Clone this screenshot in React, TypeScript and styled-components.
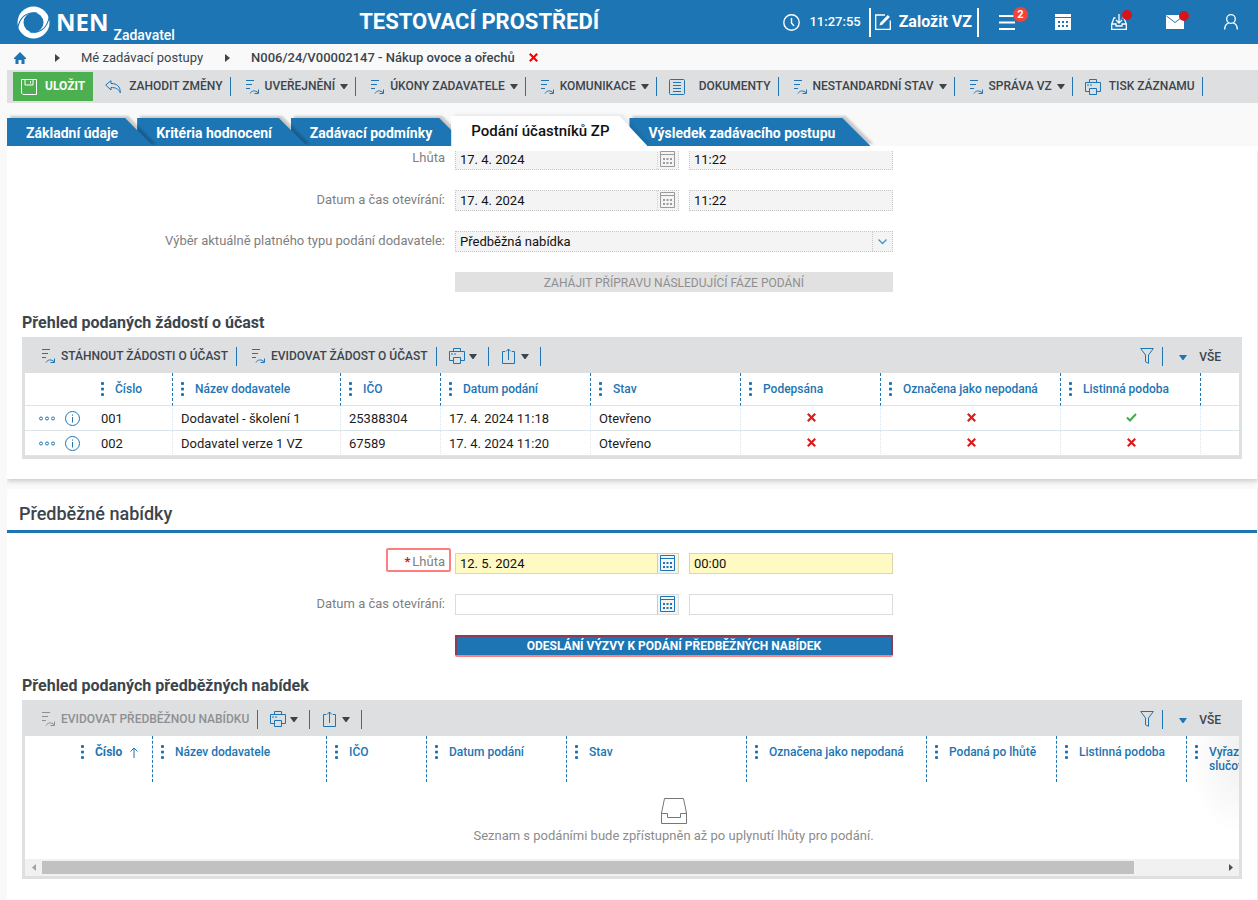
import React from "react";
import styled, { createGlobalStyle, css } from "styled-components";

const blue = "#1d75b3";
const dark = "#3c454c";
const bar = "#dedfe1";
const line = "#dbe5ec";

const GlobalStyle = createGlobalStyle`
  * { box-sizing: border-box; }
  body {
    margin: 0;
    background: #f9f9f9;
    color: #1c1c1c;
    font-family: Roboto, "Liberation Sans", sans-serif;
    font-size: 13px;
    line-height: 16px;
  }
  button, input, select { font: inherit; color: inherit; margin: 0; padding: 0; border: 0; border-radius: 0; background: none; }
  h1, h2, h3, p { margin: 0; }
  a { color: inherit; text-decoration: none; }
  svg { display: block; flex: none; }
`;

/* ---------- icons ---------- */

const ActionIcon = () => (
  <svg width="16" height="16" viewBox="0 0 16 16" fill="none" stroke="currentColor" aria-hidden="true">
    <path d="M1 1.500h8M1 5.500h6M1 9.500h4" />
    <path d="M5 14.500c1.500-3 5.500-3.500 8-.8M13.500 10.500v4h-4" />
  </svg>
);

const SaveIcon = () => (
  <svg width="16" height="16" viewBox="0 0 16 16" fill="none" stroke="currentColor" aria-hidden="true">
    <path d="M.5.5h15v15H2L.5 14zM4 .5v5.500h8V.5" />
    <path d="M9.500 2v2.500" />
  </svg>
);

const UndoIcon = () => (
  <svg width="16" height="16" viewBox="0 0 16 16" fill="none" stroke="currentColor" strokeLinejoin="round" aria-hidden="true">
    <path d="M.7 6 6 1.700v2.800c6 0 9.300 2.800 9.300 9.300-1.800-4-4.600-5.300-9.300-5.300V11z" />
  </svg>
);

const DocIcon = () => (
  <svg width="16" height="16" viewBox="0 0 16 16" fill="none" stroke="currentColor" aria-hidden="true">
    <rect x=".5" y=".5" width="15" height="15" rx="1" />
    <path d="M4 3.500h8M4 6.500h8M4 9.500h8M4 12.500h8" />
  </svg>
);

const PrintIcon = () => (
  <svg width="16" height="16" viewBox="0 0 16 16" fill="none" stroke="currentColor" aria-hidden="true">
    <path d="M4.500 3.500v-3h7v3M4.500 12.500h-4v-9h15v9h-4" />
    <path d="M4.500 9.500h7v6h-7zM2 6h2M5 6h2" />
  </svg>
);

const ShareIcon = () => (
  <svg width="16" height="16" viewBox="0 0 16 16" fill="none" stroke="currentColor" aria-hidden="true">
    <path d="M4 3.500H1.500v12h12v-12H11M7.500 12V1M5 3.500 7.500 1 10 3.500" />
  </svg>
);

const FilterIcon = () => (
  <svg width="14" height="16" viewBox="0 0 14 16" fill="none" stroke="currentColor" aria-hidden="true">
    <path d="M.7.500h12.600L8.500 7v8.300l-3-1.500V7z" />
  </svg>
);

const CaretIcon = () => (
  <svg width="8" height="5" viewBox="0 0 8 5" fill="currentColor" aria-hidden="true">
    <path d="M0 0h8L4.500 5h-1z" />
  </svg>
);

const CalendarIcon = () => (
  <svg width="15" height="16" viewBox="0 0 15 16" fill="none" stroke="currentColor" aria-hidden="true">
    <path d="M.5.5h14v15H.5zM0 3.500h15" />
    <path d="M3 8h2M6.500 8h2M10 8h2M3 12h2M6.500 12h2M10 12h2" strokeWidth="2" />
  </svg>
);

const CrossIcon = ({ color = "#dd1c1c" }: { color?: string }) => (
  <svg width="9" height="9" viewBox="0 0 9 9" fill="none" stroke={color} strokeWidth="2.200" aria-label="Ne" role="img">
    <path d="m.8.800 7.400 7.400M8.200.8.800 8.200" />
  </svg>
);

const CheckIcon = () => (
  <svg width="11" height="9" viewBox="0 0 11 9" fill="none" stroke="#43ac47" strokeWidth="2" aria-label="Ano" role="img">
    <path d="m1 4.500 3 3L10 1" />
  </svg>
);

const InfoIcon = () => (
  <svg width="15" height="15" viewBox="0 0 15 15" fill="none" stroke="currentColor" aria-hidden="true">
    <circle cx="7.500" cy="7.500" r="7" />
    <path d="M7.500 6v5.500M7.500 3.500v1.200" />
  </svg>
);

const MoreIcon = () => (
  <svg width="16" height="5" viewBox="0 0 16 5" fill="none" stroke="currentColor" aria-hidden="true">
    <circle cx="2" cy="2.500" r="1.500" />
    <circle cx="8" cy="2.500" r="1.500" />
    <circle cx="14" cy="2.500" r="1.500" />
  </svg>
);

const DotsIcon = () => (
  <svg width="3" height="14" viewBox="0 0 3 14" fill="currentColor" aria-hidden="true">
    <circle cx="1.500" cy="1.500" r="1.600" />
    <circle cx="1.500" cy="7" r="1.600" />
    <circle cx="1.500" cy="12.500" r="1.600" />
  </svg>
);

const CrumbArrow = () => (
  <svg width="5" height="8" viewBox="0 0 5 8" fill="currentColor" aria-hidden="true">
    <path d="M0 0v8l5-4z" />
  </svg>
);

/* ---------- header ---------- */

const Header = styled.header`
  display: grid;
  grid-template-columns: auto 1fr auto;
  align-items: center;
  height: 44px;
  padding-left: 17px;
  background: ${blue};
  color: #fff;
`;

const Logo = styled.a`
  display: flex;
  align-items: center;
  height: 44px;
`;

const LogoName = styled.span`
  margin-left: 6px;
  font: 700 24px/32px "Open Sans", sans-serif;
`;

const LogoRole = styled.span`
  align-self: flex-end;
  padding-left: 5px;
  font-size: 14px;
  font-weight: 500;
  line-height: 18px;
`;

const Environment = styled.h1`
  text-align: center;
  font-size: 22px;
  line-height: 24px;
  font-weight: 700;
`;

const HeaderTools = styled.div`
  display: flex;
  align-items: center;
`;

const Clock = styled.time`
  display: flex;
  align-items: center;
  gap: 9px;
  margin-right: 8px;
  font-size: 13px;
  font-weight: 500;
`;

const CreateButton = styled.button`
  display: flex;
  align-items: center;
  gap: 8px;
  height: 29px;
  margin-right: -1px;
  padding: 0 5px 0 4px;
  border: solid #fff;
  border-width: 0 2px;
  font-size: 16px;
  font-weight: 700;
`;

const HeaderButton = styled.button`
  display: flex;
  justify-content: center;
  align-items: center;
  width: 56px;
  height: 44px;
  padding-left: 2px;
`;

const IconHolder = styled.span`
  position: relative;
`;

const CountBadge = styled.span`
  position: absolute;
  left: 14px;
  top: -8px;
  width: 15px;
  height: 15px;
  border-radius: 50%;
  background: #f44336;
  font-size: 11px;
  font-weight: 700;
  line-height: 15px;
  text-align: center;
`;

const AlertDot = styled.span`
  position: absolute;
  right: -5px;
  top: -4px;
  width: 10px;
  height: 10px;
  border-radius: 50%;
  background: #d7141a;
`;

/* ---------- breadcrumb ---------- */

const Breadcrumb = styled.nav`
  display: flex;
  align-items: center;
  height: 26px;
  padding: 1px 0 0 14px;
  color: ${dark};
  svg { color: ${dark}; }
`;

const Crumb = styled.a<{ $current?: boolean }>`
  margin: 0 22px 0 21px;
  font-weight: ${(p) => (p.$current ? 500 : 400)};
  ${(p) => p.$current && css`margin-right: 14px;`}
`;

const HomeLink = styled.a`
  margin-right: 29px;
  svg { color: ${blue}; }
`;

/* ---------- toolbars ---------- */

const Toolbar = styled.div`
  display: flex;
  align-items: center;
  height: 33px;
  margin-left: 7px;
  padding-left: 6px;
  background: ${bar};
`;

const SaveButton = styled.button`
  display: flex;
  align-items: center;
  gap: 8px;
  height: 29px;
  padding: 0 8px;
  background: #4caf50;
  color: #fff;
  font-size: 12px;
  font-weight: 700;
`;

const ToolButton = styled.button<{ $kind?: "action" | "wide" | "icon" | "plain" }>`
  display: flex;
  align-items: center;
  gap: ${(p) => (p.$kind === "plain" ? 8 : p.$kind === "wide" ? 14 : 4)}px;
  height: 19px;
  padding: 0 7px 0 ${(p) => (p.$kind === "action" ? 14 : 12)}px;
  ${(p) => p.$kind === "icon" && css`padding-right: 11px;`}
  border-right: 1px solid ${blue};
  color: ${dark};
  font-size: 12px;
  font-weight: 500;
  white-space: nowrap;
  &:disabled { color: #8d9092; }
`;

const ToolText = styled.span<{ $spaced?: boolean }>`
  padding: 0 ${(p) => (p.$spaced ? 1 : 0)}px 1px 0;
`;

const ToolIcon = styled.span<{ $muted?: boolean }>`
  color: ${(p) => (p.$muted ? "#8d9092" : blue)};
`;

const GridBar = styled.div`
  display: flex;
  align-items: center;
  height: 36px;
  padding: 2px 18px 0 2px;
`;

const GridBarEnd = styled.div`
  display: flex;
  align-items: center;
  margin-left: auto;
  color: ${blue};
`;

const FilterButton = styled.button`
  height: 19px;
  padding: 0 8px;
  border-right: 1px solid ${blue};
`;

const ViewButton = styled.button`
  display: flex;
  align-items: center;
  gap: 12px;
  padding: 2px 0 0 16px;
  font-size: 12px;
  font-weight: 500;
  span { color: ${dark}; }
`;

/* ---------- tabs ---------- */

const Tabs = styled.div`
  display: flex;
  align-items: flex-end;
  height: 43px;
  padding: 0 7px;
  overflow: hidden;
`;

const TabShape = styled.span<{ $active?: boolean }>`
  position: absolute;
  inset: 0;
  z-index: -1;
  filter: drop-shadow(3px -2px 1px rgba(0, 0, 0, ${(p) => (p.$active ? 0.06 : 0.2)}));
  &::before {
    content: "";
    position: absolute;
    inset: 0;
    background: ${(p) => (p.$active ? "#fff" : blue)};
    clip-path: polygon(0 0, calc(100% - 28px) 0, 100% 100%, 0 100%);
  }
`;

const Tab = styled.button<{ $active?: boolean; $order: number }>`
  position: relative;
  z-index: ${(p) => p.$order};
  isolation: isolate;
  height: 28px;
  margin-right: -16px;
  padding: 2px 35px 0 19px;
  color: #fff;
  font-size: 14px;
  font-weight: 700;
  white-space: nowrap;
  ${(p) =>
    p.$active &&
    css`
      height: 30px;
      margin-right: -18px;
      padding: 0 38px 0 20px;
      color: #111;
      font-size: 15px;
      font-weight: 500;
    `}
`;

/* ---------- panels and forms ---------- */

const Content = styled.main`
  margin: 0 0 0 7px;
  padding-top: 5px;
  background: linear-gradient(#fff 5px, transparent 5px);
`;

const Scroller = styled.div`
  overflow: hidden;
`;

const Panel = styled.section<{ $scrolled?: boolean }>`
  margin-bottom: 10px;
  padding-bottom: 20px;
  border-right: 1px solid #e8e8e8;
  background: #fff;
  box-shadow: 0 2px 5px rgba(0, 0, 0, 0.2);
  ${(p) => p.$scrolled && css`margin-top: -2px;`}
  &:last-child { margin-bottom: 0; box-shadow: 0 1px 0 #f0f0f0; }
`;

const PanelTitle = styled.h2`
  padding: 14px 12px 5px;
  border-bottom: 3px solid ${blue};
  color: ${dark};
  font-size: 18px;
  font-weight: 500;
  line-height: 22px;
  margin-bottom: 20px;
`;

const GridTitle = styled.h3`
  padding: 0 15px;
  color: ${dark};
  font-size: 16px;
  font-weight: 700;
  line-height: 21px;
`;

const FormGrid = styled.div`
  display: grid;
  grid-template-columns: minmax(0, 438px) minmax(0, 438px);
  column-gap: 10px;
  row-gap: 20px;
  margin-bottom: 20px;
`;

const Label = styled.label<{ $raised?: boolean }>`
  justify-self: end;
  align-self: start;
  position: relative;
  color: #808080;
  line-height: ${(p) => (p.$raised ? 17 : 20)}px;
`;

const RequiredMark = styled.span`
  margin-right: 2px;
  color: #d7141a;
  font-weight: 700;
`;

const LabelHighlight = styled.span`
  position: absolute;
  inset: -5px -6px -2px -18px;
  border: 2px solid rgba(255, 0, 0, 0.5);
  border-radius: 2px;
`;

const Fields = styled.div`
  display: grid;
  grid-template-columns: 224fr 204fr;
  gap: 10px;
`;

type Look = "disabled" | "required" | "empty";

const looks = {
  disabled: css`border: 1px dotted #c8c8c8; background: #f4f4f4;`,
  required: css`border: 1px solid #ddd7a8; background: #fff9c4;`,
  empty: css`border: 1px solid #dcdcdc; background: #fff;`,
};

const DateBox = styled.div<{ $look: Look }>`
  display: flex;
  min-width: 0;
  height: 21px;
  ${(p) => looks[p.$look]}
`;

const DateInput = styled.input`
  flex: 1;
  min-width: 0;
  padding: 0 4px;
  color: #111;
`;

const PickButton = styled.button<{ $look: Look }>`
  display: flex;
  justify-content: center;
  align-items: center;
  width: 21px;
  padding: 0 2px 1px 0;
  border-left: 1px ${(p) => (p.$look === "disabled" ? "dotted" : "solid")} #ccc;
  background: #f4f4f4;
  color: ${(p) => (p.$look === "disabled" ? "#9a9a9a" : blue)};
`;

const TimeInput = styled.input<{ $look: Look }>`
  min-width: 0;
  height: 21px;
  padding: 0 4px;
  color: #111;
  && { ${(p) => looks[p.$look]} }
`;

const SelectBox = styled.div`
  display: flex;
  position: relative;
  height: 21px;
  ${looks.disabled}
`;

const Select = styled.select`
  flex: 1;
  padding: 0 4px;
  appearance: none;
  color: #111;
  opacity: 1;
`;

const SelectArrow = styled.span`
  position: absolute;
  inset: 0 0 0 auto;
  display: flex;
  justify-content: center;
  align-items: center;
  width: 20px;
  border-left: 1px dotted #c8c8c8;
  color: #3d94cc;
  pointer-events: none;
`;

const WideButton = styled.button<{ $primary?: boolean }>`
  grid-column: 2;
  position: relative;
  height: 20px;
  padding-top: 2px;
  background: ${(p) => (p.$primary ? blue : "#e1e1e1")};
  color: ${(p) => (p.$primary ? "#fff" : "#8f8f8f")};
  font-size: 12px;
  font-weight: ${(p) => (p.$primary ? 700 : 400)};
`;

const ButtonHighlight = styled.span`
  position: absolute;
  inset: 0 0 -2px;
  border: 2px solid rgba(255, 0, 0, 0.5);
  border-radius: 2px;
`;

/* ---------- data grids ---------- */

const GridBox = styled.div`
  margin: 4px 15px 0;
  border: solid ${bar};
  border-width: 0 3px 3px;
  background: linear-gradient(${bar} 36px, #fff 36px);
`;

const Table = styled.table`
  width: 100%;
  table-layout: fixed;
  border-spacing: 0;
`;

const Head = styled.th<{ $line?: boolean; $sorted?: boolean }>`
  height: ${(p) => (p.$line ? 33 : 46)}px;
  padding: 9px 8px 0;
  vertical-align: top;
  text-align: left;
  border-bottom: ${(p) => (p.$line ? `1px solid ${line}` : "0")};
  border-right: 1px dashed ${blue};
  color: ${blue};
  font-size: 12px;
  font-weight: ${(p) => (p.$sorted ? 700 : 500)};
  line-height: 14px;
  &:first-child, &:last-child { border-right: 0; }
`;

const HeadInner = styled.span`
  display: flex;
  gap: 11px;
`;

const HeadText = styled.span`
  display: flex;
  gap: 8px;
`;

const Cell = styled.td<{ $mark?: boolean }>`
  height: 25px;
  padding: ${(p) => (p.$mark ? "0 7px 2px 9px" : "2px 8px 0")};
  border-right: 1px dotted ${line};
  border-bottom: 1px solid ${line};
  white-space: nowrap;
  svg { margin: 0 auto; }
  &:first-child, &:last-child { border-right: 0; padding-top: 0; }
`;

const RowActions = styled.div`
  display: flex;
  align-items: center;
  gap: 10px;
  padding-left: 6px;
  color: ${blue};
  button { display: block; }
`;

const Viewport = styled.div`
  position: relative;
  overflow: hidden;
`;

const Wide = styled.div`
  width: 1297px;
`;

const EdgeShade = styled.div`
  position: absolute;
  top: 0;
  right: 0;
  width: 50px;
  height: 100px;
  background: radial-gradient(ellipse at 100% 20%, rgba(0, 0, 0, 0.06), transparent 70%);
  pointer-events: none;
`;

const Empty = styled.div`
  display: flex;
  flex-direction: column;
  align-items: center;
  gap: 4px;
  height: 77px;
  padding-top: 16px;
  color: #8c8c8c;
`;

const ScrollTrack = styled.div`
  display: flex;
  align-items: center;
  height: 17px;
  background: #f1f1f1;
`;

const ScrollArrow = styled.button`
  display: flex;
  justify-content: center;
  align-items: center;
  width: 17px;
  height: 17px;
  color: #505050;
  &:disabled { color: #a3a3a3; }
`;

const ScrollRail = styled.div`
  flex: 1;
`;

const ScrollThumb = styled.div`
  width: 92.5%;
  height: 13px;
  background: #c1c1c1;
`;

/* ---------- composed parts ---------- */

const MenuTool = ({ text }: { text: string }) => (
  <ToolButton $kind="action">
    <ToolIcon><ActionIcon /></ToolIcon>
    <ToolText $spaced>{text}</ToolText>
    <CaretIcon />
  </ToolButton>
);

const GridTools = ({ actions, disabled }: { actions: string[]; disabled?: boolean }) => (
  <GridBar>
    {actions.map((text) => (
      <ToolButton key={text} $kind="action" disabled={disabled}>
        <ToolIcon $muted={disabled}><ActionIcon /></ToolIcon>
        <ToolText $spaced>{text}</ToolText>
      </ToolButton>
    ))}
    <ToolButton $kind="icon" aria-label="Tisk">
      <ToolIcon><PrintIcon /></ToolIcon>
      <CaretIcon />
    </ToolButton>
    <ToolButton $kind="icon" aria-label="Export">
      <ToolIcon><ShareIcon /></ToolIcon>
      <CaretIcon />
    </ToolButton>
    <GridBarEnd>
      <FilterButton aria-label="Filtr"><FilterIcon /></FilterButton>
      <ViewButton><CaretIcon /><span>VŠE</span></ViewButton>
    </GridBarEnd>
  </GridBar>
);

const DateRow = ({ id, label, date, time, look, required }: {
  id: string; label: string; date: string; time: string; look: Look; required?: boolean;
}) => (
  <>
    <Label htmlFor={id} $raised={!label.endsWith(":")}>
      {required && <RequiredMark>*</RequiredMark>}
      {label}
      {required && <LabelHighlight />}
    </Label>
    <Fields>
      <DateBox $look={look}>
        <DateInput id={id} defaultValue={date} disabled={look === "disabled"} />
        <PickButton $look={look} disabled={look === "disabled"} aria-label="Vybrat datum"><CalendarIcon /></PickButton>
      </DateBox>
      <TimeInput $look={look} defaultValue={time} disabled={look === "disabled"} aria-label={`${label} čas`} />
    </Fields>
  </>
);

const HeadCell = ({ text, line: withLine, sorted }: { text: string; line?: boolean; sorted?: boolean }) => (
  <Head $line={withLine} $sorted={sorted} scope="col">
    {text && (
      <HeadInner>
        <DotsIcon />
        <HeadText>
          {text}
          {sorted && (
            <svg width="8" height="14" viewBox="0 0 8 14" fill="none" stroke="currentColor" aria-hidden="true">
              <path d="M4 13V3M.5 6.500 4 3l3.500 3.500" />
            </svg>
          )}
        </HeadText>
      </HeadInner>
    )}
  </Head>
);

const requestColumns = [
  ["", 68], ["Číslo", 80], ["Název dodavatele", 168], ["IČO", 100], ["Datum podání", 150],
  ["Stav", 150], ["Podepsána", 140], ["Označena jako nepodaná", 180], ["Listinná podoba", 140], ["", 0],
] as [string, number][];

const offerColumns = [
  ["", 48], ["Číslo", 80], ["Název dodavatele", 174], ["IČO", 100], ["Datum podání", 140],
  ["Stav", 180], ["Označena jako nepodaná", 180], ["Podaná po lhůtě", 130], ["Listinná podoba", 130],
  ["Vyřazeno ze slučování", 135],
] as [string, number][];

const requests = [
  { no: "001", name: "Dodavatel - školení 1", ico: "25388304", date: "17. 4. 2024 11:18", state: "Otevřeno", paper: true },
  { no: "002", name: "Dodavatel verze 1 VZ", ico: "67589", date: "17. 4. 2024 11:20", state: "Otevřeno", paper: false },
];

const Columns = ({ list }: { list: [string, number][] }) => (
  <colgroup>
    {list.map(([, width], i) => <col key={i} width={width || undefined} />)}
  </colgroup>
);

export default function App() {
  return (
    <>
      <GlobalStyle />
      <Header>
        <Logo href="#">
          <svg width="33" height="33" viewBox="0 0 33 33" aria-hidden="true">
            <circle cx="16.500" cy="16.500" r="16" fill="#fff" />
            <circle cx="16.500" cy="16.500" r="10" fill={blue} />
            <path d="M.5 23C2.500 12 9 5.500 20 7" fill="none" stroke={blue} strokeWidth="1.200" />
            <path d="M32.500 10C30.500 21 24 27.500 13 26" fill="none" stroke={blue} strokeWidth="1.200" />
          </svg>
          <LogoName>NEN</LogoName>
          <LogoRole>Zadavatel</LogoRole>
        </Logo>
        <Environment>TESTOVACÍ PROSTŘEDÍ</Environment>
        <HeaderTools>
          <Clock>
            <svg width="17" height="17" viewBox="0 0 17 17" fill="none" stroke="currentColor" aria-hidden="true">
              <circle cx="8.500" cy="8.500" r="7.700" strokeWidth="1.400" />
              <path d="M8.500 4v5l2.500 3" strokeWidth="1.400" />
            </svg>
            11:27:55
          </Clock>
          <CreateButton>
            <svg width="16" height="16" viewBox="0 0 16 16" fill="none" stroke="currentColor" aria-hidden="true">
              <path d="M10 1H.7v14.300h14.600V6.500" strokeWidth="1.300" />
              <path d="m4.500 11.500.8-2.800L12.800 1l2 2-7.500 7.700z" fill="currentColor" stroke="none" />
            </svg>
            Založit VZ
          </CreateButton>
          <HeaderButton aria-label="Nabídka">
            <IconHolder>
              <svg width="16" height="15" viewBox="0 0 16 15" fill="none" stroke="currentColor" strokeWidth="2" aria-hidden="true">
                <path d="M0 1h16M0 7.500h16M0 14h16" />
              </svg>
              <CountBadge>2</CountBadge>
            </IconHolder>
          </HeaderButton>
          <HeaderButton aria-label="Kalendář">
            <svg width="16" height="16" viewBox="0 0 16 16" aria-hidden="true">
              <path d="M0 0h16v3H0zM0 4h16v12H0z" fill="#fff" />
              <path d="M3 8h2M7 8h2M11 8h2M3 12h2M7 12h2M11 12h2" stroke={blue} strokeWidth="2" />
            </svg>
          </HeaderButton>
          <HeaderButton aria-label="Stažené">
            <IconHolder>
              <svg width="16" height="16" viewBox="0 0 16 16" fill="none" stroke="currentColor" strokeWidth="1.300" aria-hidden="true">
                <path d="M4.500 4H3L.7 10v5.300h14.600V10L13 4h-1.500M.7 10H5v2h6v-2h4.300M8 0v8.500M5 6l3 3 3-3" />
              </svg>
              <AlertDot />
            </IconHolder>
          </HeaderButton>
          <HeaderButton aria-label="Zprávy">
            <IconHolder>
              <svg width="18" height="14" viewBox="0 0 18 14" aria-hidden="true">
                <path d="M0 0h18v14H0z" fill="#fff" />
                <path d="m.5 1 8.500 6.500L17.500 1" fill="none" stroke={blue} />
              </svg>
              <AlertDot />
            </IconHolder>
          </HeaderButton>
          <HeaderButton aria-label="Uživatel">
            <svg width="14" height="16" viewBox="0 0 14 16" fill="none" stroke="currentColor" strokeWidth="1.300" aria-hidden="true">
              <circle cx="7" cy="5" r="4.300" />
              <path d="M.7 15.500C.7 11.500 3 9 5 8.800M13.300 15.500c0-4-2.300-6.500-4.300-6.700" />
            </svg>
          </HeaderButton>
        </HeaderTools>
      </Header>

      <Breadcrumb>
        <HomeLink href="#" aria-label="Domů">
          <svg width="12" height="12" viewBox="0 0 12 12" fill="currentColor" aria-hidden="true">
            <path d="M6 0 0 6v1h1.500v5h3V8h3v4h3V7H12V6z" />
          </svg>
        </HomeLink>
        <CrumbArrow />
        <Crumb href="#">Mé zadávací postupy</Crumb>
        <CrumbArrow />
        <Crumb href="#" $current>N006/24/V00002147 - Nákup ovoce a ořechů</Crumb>
        <CrossIcon color="#f00" />
      </Breadcrumb>

      <Toolbar>
        <SaveButton><SaveIcon /><ToolText>ULOŽIT</ToolText></SaveButton>
        <ToolButton $kind="plain"><ToolIcon><UndoIcon /></ToolIcon><ToolText>ZAHODIT ZMĚNY</ToolText></ToolButton>
        <MenuTool text="UVEŘEJNĚNÍ" />
        <MenuTool text="ÚKONY ZADAVATELE" />
        <MenuTool text="KOMUNIKACE" />
        <ToolButton $kind="wide"><ToolIcon><DocIcon /></ToolIcon><ToolText>DOKUMENTY</ToolText></ToolButton>
        <MenuTool text="NESTANDARDNÍ STAV" />
        <MenuTool text="SPRÁVA VZ" />
        <ToolButton $kind="plain"><ToolIcon><PrintIcon /></ToolIcon><ToolText>TISK ZÁZNAMU</ToolText></ToolButton>
      </Toolbar>

      <Tabs role="tablist">
        <Tab role="tab" $order={4}><TabShape />Základní údaje</Tab>
        <Tab role="tab" $order={3}><TabShape />Kritéria hodnocení</Tab>
        <Tab role="tab" $order={2}><TabShape />Zadávací podmínky</Tab>
        <Tab role="tab" $order={5} $active aria-selected><TabShape $active />Podání účastníků ZP</Tab>
        <Tab role="tab" $order={1}><TabShape />Výsledek zadávacího postupu</Tab>
      </Tabs>

      <Content>
        <Scroller>
          <Panel $scrolled>
            <FormGrid>
              <DateRow id="deadline" label="Lhůta" date="17. 4. 2024" time="11:22" look="disabled" />
              <DateRow id="opening" label="Datum a čas otevírání:" date="17. 4. 2024" time="11:22" look="disabled" />
              <Label htmlFor="type">Výběr aktuálně platného typu podání dodavatele:</Label>
              <SelectBox>
                <Select id="type" disabled><option>Předběžná nabídka</option></Select>
                <SelectArrow>
                  <svg width="9" height="6" viewBox="0 0 9 6" fill="none" stroke="currentColor" strokeWidth="1.300"><path d="m.5.500 4 4 4-4" /></svg>
                </SelectArrow>
              </SelectBox>
              <WideButton disabled>ZAHÁJIT PŘÍPRAVU NÁSLEDUJÍCÍ FÁZE PODÁNÍ</WideButton>
            </FormGrid>
            <GridTitle>Přehled podaných žádostí o účast</GridTitle>
            <GridBox>
              <GridTools actions={["STÁHNOUT ŽÁDOSTI O ÚČAST", "EVIDOVAT ŽÁDOST O ÚČAST"]} />
              <Table>
                <Columns list={requestColumns} />
                <thead>
                  <tr>{requestColumns.map(([text], i) => <HeadCell key={i} text={text} line />)}</tr>
                </thead>
                <tbody>
                  {requests.map((r) => (
                    <tr key={r.no}>
                      <Cell>
                        <RowActions>
                          <button aria-label="Akce"><MoreIcon /></button>
                          <button aria-label="Detail"><InfoIcon /></button>
                        </RowActions>
                      </Cell>
                      <Cell>{r.no}</Cell>
                      <Cell>{r.name}</Cell>
                      <Cell>{r.ico}</Cell>
                      <Cell>{r.date}</Cell>
                      <Cell>{r.state}</Cell>
                      <Cell $mark><CrossIcon /></Cell>
                      <Cell $mark><CrossIcon /></Cell>
                      <Cell $mark>{r.paper ? <CheckIcon /> : <CrossIcon />}</Cell>
                      <Cell />
                    </tr>
                  ))}
                </tbody>
              </Table>
            </GridBox>
          </Panel>

          <Panel>
            <PanelTitle>Předběžné nabídky</PanelTitle>
            <FormGrid>
              <DateRow id="offerDeadline" label="Lhůta" date="12. 5. 2024" time="00:00" look="required" required />
              <DateRow id="offerOpening" label="Datum a čas otevírání:" date="" time="" look="empty" />
              <WideButton $primary>
                ODESLÁNÍ VÝZVY K PODÁNÍ PŘEDBĚŽNÝCH NABÍDEK
                <ButtonHighlight />
              </WideButton>
            </FormGrid>
            <GridTitle>Přehled podaných předběžných nabídek</GridTitle>
            <GridBox>
              <GridTools actions={["EVIDOVAT PŘEDBĚŽNOU NABÍDKU"]} disabled />
              <Viewport>
                <Wide>
                  <Table>
                    <Columns list={offerColumns} />
                    <thead>
                      <tr>{offerColumns.map(([text], i) => <HeadCell key={i} text={text} sorted={i === 1} />)}</tr>
                    </thead>
                  </Table>
                  <Empty>
                    <svg width="26" height="26" viewBox="0 0 26 26" fill="none" stroke="#777" aria-hidden="true">
                      <path d="M.5 15v10.500h25V15L22.500.5h-19zM.5 15.500h6v4h13v-4h6" />
                    </svg>
                    <p>Seznam s podáními bude zpřístupněn až po uplynutí lhůty pro podání.</p>
                  </Empty>
                </Wide>
                <EdgeShade />
              </Viewport>
              <ScrollTrack>
                <ScrollArrow disabled aria-label="Posunout vlevo">
                  <svg width="4" height="7" viewBox="0 0 4 7" fill="currentColor"><path d="M4 0v7L0 3.500z" /></svg>
                </ScrollArrow>
                <ScrollRail><ScrollThumb /></ScrollRail>
                <ScrollArrow aria-label="Posunout vpravo">
                  <svg width="4" height="7" viewBox="0 0 4 7" fill="currentColor"><path d="M0 0v7l4-3.500z" /></svg>
                </ScrollArrow>
              </ScrollTrack>
            </GridBox>
          </Panel>
        </Scroller>
      </Content>
    </>
  );
}
